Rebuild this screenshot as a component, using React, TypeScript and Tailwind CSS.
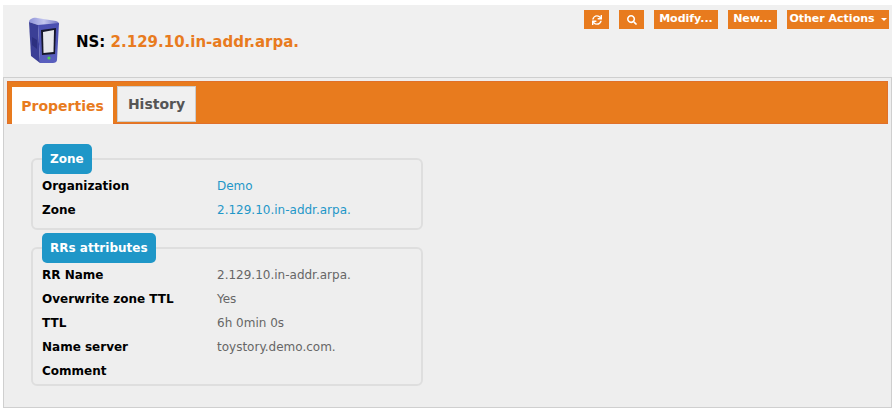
import { FaSearch, FaSync } from "react-icons/fa";

const font = { fontFamily: '"DejaVu Sans", sans-serif' };

function ServerIcon() {
  return (
    <svg width="32" height="46" viewBox="0 0 32 46" className="block">
      <defs>
        <linearGradient id="top" x1="0" y1="0" x2="1" y2="0">
          <stop offset="0" stopColor="#8f93d8" />
          <stop offset="0.5" stopColor="#c3c6ee" />
          <stop offset="1" stopColor="#6f72c0" />
        </linearGradient>
        <linearGradient id="front" x1="0" y1="0" x2="0" y2="1">
          <stop offset="0" stopColor="#4a4fb0" />
          <stop offset="1" stopColor="#5a5fbe" />
        </linearGradient>
      </defs>
      <path d="M1 5 C1 2 6 0 9 1 L28 4 C31 5 31 6 31 8 L10 8 Z" fill="url(#top)" />
      <path d="M1 5 L10 8 L12 46 L3 39 Z" fill="#3b3f96" />
      <path d="M10 8 L31 6 L29 43 C29 45 27 46 25 46 L12 46 Z" fill="url(#front)" />
      <path d="M13 13 L28 11 L27 37 L14 38 Z" fill="#16162a" />
      <path d="M15 15 L26 13 L25.5 35 L15.5 36 Z" fill="#e8e8ec" />
      <path d="M4 20 L9 23 L9 32 L4 28 Z" fill="#2d3080" />
      <circle cx="21" cy="41" r="1.6" fill="#4fd04f" />
    </svg>
  );
}

function ActionButton({ children, className }: { children: React.ReactNode; className: string }) {
  return (
    <button className={`h-[19px] bg-[#e87b1e] text-white text-[11px] font-bold flex items-center justify-center ${className}`}>
      {children}
    </button>
  );
}

function Row({ label, value, valueClass }: { label: string; value?: string; valueClass: string }) {
  return (
    <div className="flex h-6 items-center text-xs">
      <div className="w-[175px] font-bold text-black">{label}</div>
      <div className={valueClass}>{value}</div>
    </div>
  );
}

function Group({ title, className, children }: { title: string; className: string; children: React.ReactNode }) {
  return (
    <div className={`w-[392px] border-2 border-[#dedede] rounded-md pl-[9px] ${className}`}>
      <div className="relative -mt-[16px] w-fit h-[30px] px-2 flex items-center rounded-[5px] bg-[#1f97c8] text-white text-xs font-bold">
        {title}
      </div>
      {children}
    </div>
  );
}

export default function App() {
  return (
    <div style={font} className="w-[892px] h-[414px] bg-white pt-[5px] pl-[3px] overflow-hidden">
      {/* Header */}
      <div className="h-[72px] bg-[#f0f0f0] flex justify-between pl-[25px] pr-[3px]">
        <div className="flex items-start pt-[12px]">
          <ServerIcon />
          <h1 className="ml-[16px] mt-[14px] text-[15px] font-bold text-black whitespace-nowrap">
            NS: <span className="text-[#e87b1e]">2.129.10.in-addr.arpa.</span>
          </h1>
        </div>
        <div className="flex gap-[10px] pt-[5px]">
          <ActionButton className="w-[25px]"><FaSync className="w-[10px] h-[10px]" /></ActionButton>
          <ActionButton className="w-[25px]"><FaSearch className="w-[10px] h-[10px]" /></ActionButton>
          <ActionButton className="w-[64px]">Modify...</ActionButton>
          <ActionButton className="w-[49px]">New...</ActionButton>
          <ActionButton className="w-[102px] gap-[6px]">
            Other Actions
            <span className="border-x-[3px] border-t-[3px] border-x-transparent border-t-white" />
          </ActionButton>
        </div>
      </div>

      {/* Panel */}
      <div className="w-[889px] h-[331px] bg-[#eeeeee] border border-[#cfcfcf] pt-[3px] pl-[3px]">
        <div className="w-[881px] h-[43px] bg-[#e87b1e] border border-[#e0702a] pl-[4px] flex items-start gap-1">
          <div className="mt-[5px] w-[101px] h-[37px] bg-white text-[#e87b1e] text-sm font-bold flex items-center justify-center">
            Properties
          </div>
          <div className="mt-[4px] w-[79px] h-[36px] bg-[#f0f0f0] border border-[#cccccc] text-[#555555] text-sm font-bold flex items-center justify-center">
            History
          </div>
        </div>

        <div className="pl-[24px] pt-[34px]">
          <Group title="Zone" className="h-[72px]">
            <Row label="Organization" value="Demo" valueClass="text-[#1f97c8]" />
            <Row label="Zone" value="2.129.10.in-addr.arpa." valueClass="text-[#1f97c8]" />
          </Group>
          <Group title="RRs attributes" className="h-[139px] mt-[17px]">
            <Row label="RR Name" value="2.129.10.in-addr.arpa." valueClass="text-[#666666]" />
            <Row label="Overwrite zone TTL" value="Yes" valueClass="text-[#666666]" />
            <Row label="TTL" value="6h 0min 0s" valueClass="text-[#666666]" />
            <Row label="Name server" value="toystory.demo.com." valueClass="text-[#666666]" />
            <Row label="Comment" valueClass="text-[#666666]" />
          </Group>
        </div>
      </div>
    </div>
  );
}
